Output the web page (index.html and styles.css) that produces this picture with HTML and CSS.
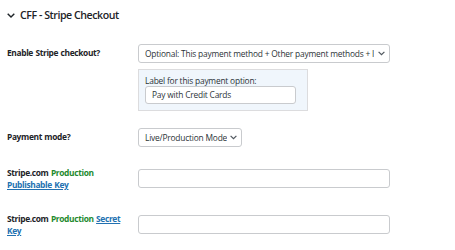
FILE: index.html
```html
<!DOCTYPE html>
<html lang="en">
<head>
  <meta charset="UTF-8" />
  <meta name="viewport" content="width=device-width, initial-scale=1.0" />
  <title>CFF - Stripe Checkout</title>
  <link rel="stylesheet" href="styles.css">
</head>
<body>

  <h2 class="section-title">
    <svg class="chevron" width="8" height="5" viewBox="0 0 8 5">
      <path d="M0.7 0.7 L4 4 L7.3 0.7" fill="none" stroke="#1d2327" stroke-width="1.4" />
    </svg>
    CFF - Stripe Checkout
  </h2>

  <div class="form-table">

    <div class="row row-enable">
      <div class="label">Enable Stripe checkout?</div>
      <div class="field">
        <div class="select select-wide">
          <span class="select-text">Optional: This payment method + Other payment methods + I</span>
          <svg class="select-arrow" width="7" height="5" viewBox="0 0 7 5">
            <path d="M0.6 0.8 L3.5 3.7 L6.4 0.8" fill="none" stroke="#50575e" stroke-width="1.2" />
          </svg>
        </div>
        <div class="option-box">
          <div class="option-label">Label for this payment option:</div>
          <div class="text-input small">Pay with Credit Cards</div>
        </div>
      </div>
    </div>

    <div class="row row-mode">
      <div class="label">Payment mode?</div>
      <div class="field">
        <div class="select select-mode">
          <span class="select-text">Live/Production Mode</span>
          <svg class="select-arrow" width="7" height="5" viewBox="0 0 7 5">
            <path d="M0.6 0.8 L3.5 3.7 L6.4 0.8" fill="none" stroke="#50575e" stroke-width="1.2" />
          </svg>
        </div>
      </div>
    </div>

    <div class="row row-key">
      <div class="label">Stripe.com <span class="green">Production</span><br><a href="#">Publishable Key</a></div>
      <div class="field">
        <div class="text-input wide"></div>
      </div>
    </div>

    <div class="row row-secret">
      <div class="label">Stripe.com <span class="green">Production</span> <a href="#">Secret Key</a></div>
      <div class="field">
        <div class="text-input wide"></div>
      </div>
    </div>

  </div>

</body>
</html>
```

FILE: styles.css
```css
*, *::before, *::after {
  box-sizing: border-box;
}

:root {
  --color-text: #1d2327;
  --color-field: #2c3338;
  --color-border: #c9cbce;
  --color-link: #2271b1;
  --color-green: #1e8a2e;
}

html, body {
  margin: 0;
  padding: 0;
  background-color: #ffffff;
  font-family: 'Open Sans', sans-serif;
  color: var(--color-text);
}

body {
  padding-left: 7px;
  width: 455px;
  height: 250px;
  overflow: hidden;
}

.section-title {
  display: flex;
  align-items: center;
  gap: 5px;
  margin: 0;
  padding-top: 7px;
  height: 23px;
  font-size: 10.6px;
  font-weight: 600;
  letter-spacing: -0.45px;
}

.chevron {
  display: block;
}

.row {
  display: grid;
  grid-template-columns: 131px 1fr;
  align-items: start;
}

.label {
  font-size: 8.4px;
  font-weight: 700;
  line-height: 12px;
  letter-spacing: -0.35px;
  word-spacing: 0.6px;
  width: 122px;
}

.label a {
  color: var(--color-link);
}

.green {
  color: var(--color-green);
}

.row-enable {
  margin-top: 21px;
}

.row-enable .label {
  padding-top: 3px;
}

.row-mode {
  margin-top: 17px;
}

.row-mode .label {
  padding-top: 3px;
}

.row-key {
  margin-top: 20px;
}

.row-key .field {
  padding-top: 2px;
}

.row-secret {
  margin-top: 22px;
}

.row-secret .field {
  padding-top: 2px;
}

.select {
  display: flex;
  align-items: center;
  justify-content: space-between;
  height: 19px;
  padding: 0 4px 0 6px;
  border: 1px solid var(--color-border);
  border-radius: 3px;
  background-color: #fff;
  font-size: 8.4px;
  letter-spacing: -0.2px;
  color: var(--color-field);
  overflow: hidden;
}

.select-text {
  white-space: nowrap;
  overflow: hidden;
}

.select-arrow {
  flex-shrink: 0;
  margin-left: 2px;
}

.select-wide {
  width: 252px;
}

.select-mode {
  width: 104px;
}

.option-box {
  width: 170px;
  margin-top: 6px;
  padding: 5px 6px 6px 6px;
  background-color: #f0f6fc;
  border: 1px solid #dcdcde;
}

.option-label {
  font-size: 8.4px;
  line-height: 11px;
  letter-spacing: -0.2px;
  color: var(--color-field);
}

.text-input {
  height: 19px;
  border: 1px solid var(--color-border);
  border-radius: 3px;
  background-color: #fff;
  font-size: 8.4px;
  letter-spacing: -0.2px;
  line-height: 17px;
  color: var(--color-field);
  padding: 0 6px;
}

.text-input.small {
  width: 151px;
  height: 18px;
  line-height: 16px;
}

.text-input.wide {
  width: 252px;
}
```
